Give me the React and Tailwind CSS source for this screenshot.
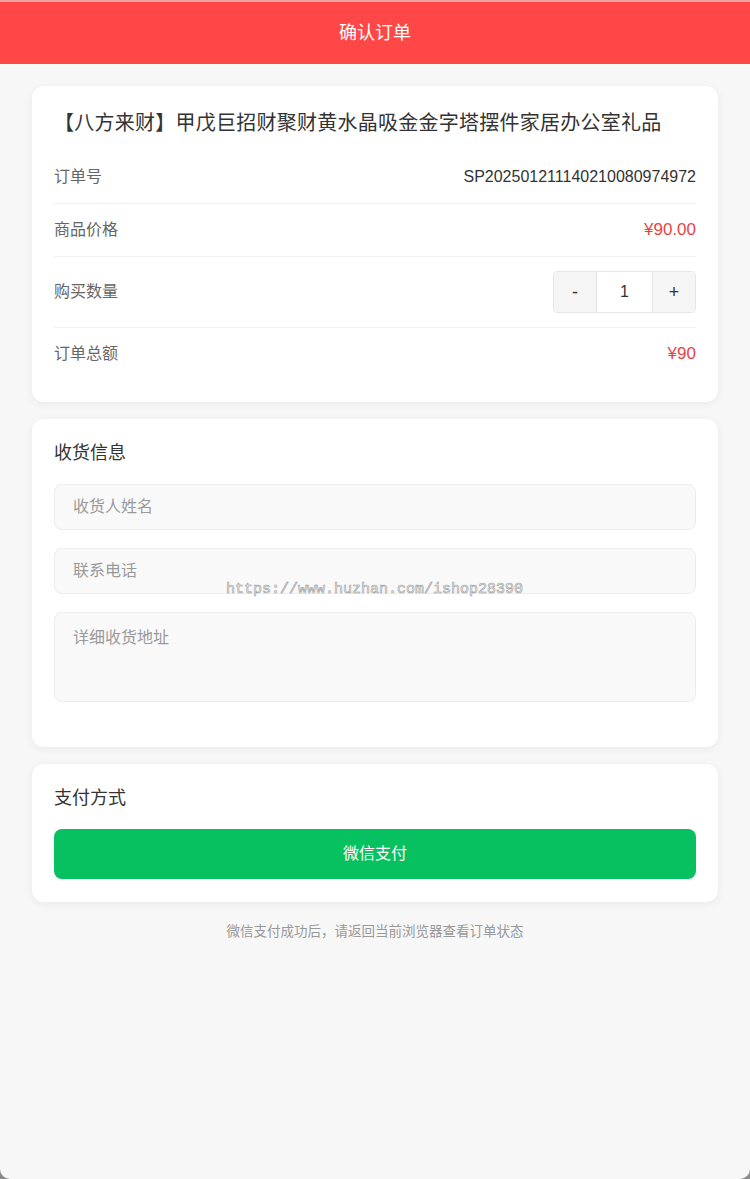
import React, { useState } from 'react';

const font = { fontFamily: '"Liberation Sans", "Noto Sans CJK SC", sans-serif' };

const Row = ({ label, children, last }) => (
  <div className={`flex items-center justify-between py-[14px] ${last ? '' : 'border-b border-[#f0f0f0]'}`}>
    <span className="text-[16px] leading-[24px] text-[#666]">{label}</span>
    {children}
  </div>
);

const App = () => {
  const [qty, setQty] = useState(1);
  const price = 90;

  return (
    <div className="min-h-[1179px] bg-[#8a8a8a]" style={font}>
      <div className="relative min-h-[1179px] rounded-b-[10px] bg-[#f7f7f7]">
        <header className="flex h-[64px] items-center justify-center border-t-2 border-[#f2a3a3] bg-[#ff4747]">
          <h1 className="text-[18px] leading-[24px] text-white">确认订单</h1>
        </header>

        <main className="flex flex-col gap-[17px] px-[32px] pt-[22px]">
          <section className="rounded-[12px] bg-white p-[22px] shadow-[0_2px_10px_rgba(0,0,0,0.06)]">
            <h2 className="mb-[13px] text-[20px] leading-[30px] tracking-[0.25px] text-[#333]">
              【八方来财】甲戊巨招财聚财黄水晶吸金金字塔摆件家居办公室礼品
            </h2>
            <Row label="订单号">
              <span className="text-[16px] leading-[24px] text-[#333]">SP202501211140210080974972</span>
            </Row>
            <Row label="商品价格">
              <span className="text-[17px] leading-[24px] text-[#e84343]">¥{price.toFixed(2)}</span>
            </Row>
            <Row label="购买数量">
              <div className="flex h-[42px] overflow-hidden rounded-[4px] border border-[#e6e6e6]">
                <button
                  className="w-[42px] bg-[#f5f5f5] text-[18px] text-[#333]"
                  onClick={() => setQty(q => Math.max(1, q - 1))}
                >
                  -
                </button>
                <input
                  className="w-[57px] border-x border-[#e6e6e6] bg-white text-center text-[16px] text-[#333] outline-none"
                  value={qty}
                  onChange={e => setQty(Number(e.target.value) || 1)}
                />
                <button
                  className="w-[42px] bg-[#f5f5f5] text-[18px] text-[#333]"
                  onClick={() => setQty(q => q + 1)}
                >
                  +
                </button>
              </div>
            </Row>
            <Row label="订单总额" last>
              <span className="text-[17px] leading-[24px] text-[#e84343]">¥{price * qty}</span>
            </Row>
          </section>

          <section className="rounded-[12px] bg-white px-[22px] pt-[22px] pb-[45px] shadow-[0_2px_10px_rgba(0,0,0,0.06)]">
            <h2 className="mb-[19px] text-[18px] leading-[24px] text-[#333]">收货信息</h2>
            <div className="flex flex-col gap-[18px]">
              <input
                className="h-[46px] rounded-[8px] border border-[#ececec] bg-[#f9f9f9] px-[18px] text-[16px] text-[#333] outline-none placeholder:text-[#999]"
                placeholder="收货人姓名"
              />
              <input
                className="h-[46px] rounded-[8px] border border-[#ececec] bg-[#f9f9f9] px-[18px] text-[16px] text-[#333] outline-none placeholder:text-[#999]"
                placeholder="联系电话"
              />
              <textarea
                className="h-[90px] resize-none rounded-[8px] border border-[#ececec] bg-[#f9f9f9] px-[18px] py-[13px] text-[16px] leading-[24px] text-[#333] outline-none placeholder:text-[#999]"
                placeholder="详细收货地址"
              />
            </div>
          </section>

          <section className="rounded-[12px] bg-white px-[22px] pt-[22px] pb-[23px] shadow-[0_2px_10px_rgba(0,0,0,0.06)]">
            <h2 className="mb-[19px] text-[18px] leading-[24px] text-[#333]">支付方式</h2>
            <button className="h-[50px] w-full rounded-[8px] bg-[#07c160] text-[16px] text-white">微信支付</button>
          </section>

          <p className="mt-[3px] text-center text-[13.5px] leading-[20px] text-[#999]">
            微信支付成功后，请返回当前浏览器查看订单状态
          </p>
        </main>

        <div
          className="pointer-events-none absolute left-[226px] top-[579px] text-[15px] leading-[22px] text-[#f4f4f4] [-webkit-text-stroke:0.6px_#a0a0a0]"
          style={{ fontFamily: '"Liberation Mono", monospace' }}
        >
          https://www.huzhan.com/ishop28390
        </div>
      </div>
    </div>
  );
};

export default App;
